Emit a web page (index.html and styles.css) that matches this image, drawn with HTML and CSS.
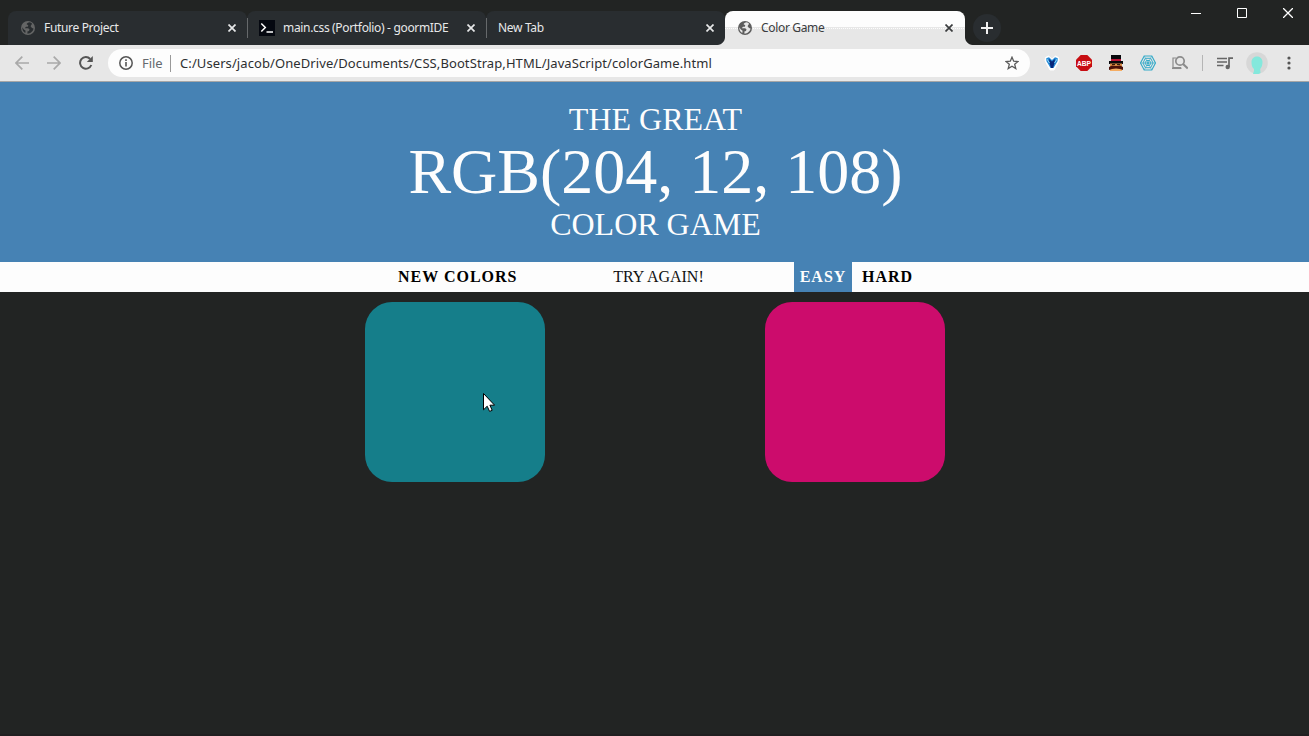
FILE: index.html
```html
<!DOCTYPE html>
<html lang="en">
<head>
<meta charset="utf-8">
<title>Color Game</title>
<link rel="stylesheet" href="styles.css">
</head>
<body>
<svg width="0" height="0" class="defs">
  <symbol id="globe" viewBox="0 0 14 14"><circle cx="7" cy="7" r="7" fill="currentColor"/><path class="land" d="M8.6 1.3C7 1.5 6 2.300 5.600 3.300L7.300 4.200 6.800 5.700H5L3.800 7.200H7.100L8.500 8.300 8 10.100 6.400 10.600 6.500 12.700C9.500 12.600 12.200 10.300 12.500 7.500L11 7.100 9.600 5.300 10.300 3.700 11.200 3C10.500 2 9.600 1.500 8.600 1.300ZM1.300 6.200C1.100 8.700 2.300 10.900 4.300 12L4.600 9.700 2.900 8.600Z"/></symbol>
  <symbol id="close" viewBox="0 0 8 8"><path d="M.5.5l7 7M7.500.500l-7 7" stroke="currentColor" stroke-width="1.700"/></symbol>
</svg>
<div class="titlebar">
  <div class="tab first">
    <svg class="favicon dim"><use href="#globe"/></svg><span class="tab-title">Future Project</span><svg class="close"><use href="#close"/></svg>
  </div>
  <div class="tab ide">
    <svg class="terminal" viewBox="0 0 16 16"><path fill="#050810" d="M0 0h16v16H0z"/><path d="M2.300 3.500l4 4-4 4M7.500 12h6.500" fill="none" stroke="#fff" stroke-width="1.500"/></svg><span class="tab-title">main.css (Portfolio) - goormIDE</span><svg class="close"><use href="#close"/></svg>
  </div>
  <div class="tab">
    <span class="tab-title t-new">New Tab</span><svg class="close"><use href="#close"/></svg>
  </div>
  <div class="tab active">
    <svg class="favicon"><use href="#globe"/></svg><span class="tab-title">Color Game</span><svg class="close"><use href="#close"/></svg>
  </div>
  <div class="new-tab"><svg width="12" height="12" viewBox="0 0 12 12"><path d="M6 0v12M0 6h12" stroke="#f1f1f1" stroke-width="2"/></svg></div>
  <div class="window-buttons">
    <svg width="10" height="10"><path d="M0 5.500h10" stroke="#fff"/></svg>
    <svg width="10" height="10"><path d="M.5.500h9v9h-9z" fill="none" stroke="#fff"/></svg>
    <svg width="10" height="10"><path d="M0 0l10 10M10 0L0 10" stroke="#fff" stroke-width="1.300"/></svg>
  </div>
</div>
<div class="toolbar">
  <div class="nav">
    <svg width="14" height="14" viewBox="0 0 14 14"><path d="M14 7H1.500M7.300.700L1 7l6.300 6.300" fill="none" stroke="#a9a9a9" stroke-width="1.700"/></svg>
    <svg width="14" height="14" viewBox="0 0 14 14"><path d="M0 7h12.500M6.700.700L13 7l-6.300 6.300" fill="none" stroke="#a9a9a9" stroke-width="1.700"/></svg>
    <svg width="14" height="14" viewBox="0 0 14 14"><path d="M12.300 9A5.800 5.800 0 1 1 11.200 3" fill="none" stroke="#555" stroke-width="2"/><path d="M13.800 0v6H7.800z" fill="#555"/></svg>
  </div>
  <div class="address">
    <svg width="14" height="14" viewBox="0 0 14 14"><circle cx="7" cy="7" r="6.200" fill="none" stroke="#555" stroke-width="1.500"/><path d="M7 6v4.500M7 3.300v1.600" stroke="#555" stroke-width="1.600"/></svg>
    <span class="scheme">File</span><span class="url">C:/Users/jacob/OneDrive/Documents/CSS,BootStrap,HTML/JavaScript/colorGame.html</span>
    <svg class="star" width="14" height="14" viewBox="0 0 14 14"><path d="M7 1.200l1.700 4 4.300.300-3.300 2.800 1.100 4.300L7 10.300l-3.800 2.300 1.100-4.300L1 5.500l4.300-.300z" fill="none" stroke="#5a5a5a" stroke-width="1.300"/></svg>
  </div>
  <div class="extensions">
    <svg viewBox="0 0 16 16"><path d="M1.500 2.500 4.500 1l3.500 3L11.500 1l3 1.500.5 3-2.500 5L10 15H6l-2.500-4.500L1 5.500z" fill="#fff" stroke="#fff"/><path d="M2 3.300 5 2.300 8 5l3-2.700 3 1-.5 3L9.500 13h-3l-4-6.700z" fill="#2489d6"/><path d="M5 4 8 6.500 11 4l-.7 4.500L9 13H7L5.700 8.500z" fill="#06267a"/><path d="M2.500 3.500l3 4.500M13.500 3.500l-3 4.500" stroke="#8bd3f5"/></svg>
    <svg viewBox="0 0 16 16"><path d="M4.700 0h6.600L16 4.700v6.600L11.300 16H4.700L0 11.300V4.700z" fill="#c70d12"/><text x="8" y="11" text-anchor="middle" textLength="14" lengthAdjust="spacingAndGlyphs" class="abp">ABP</text></svg>
    <svg viewBox="0 0 16 16"><path d="M3 0h10v6H3zM1 6h14v3H1z" fill="#08080c"/><path d="M3 4h10v2H3z" fill="#bd1538"/><path d="M2 8.500h12V12H2z" fill="#dc8c46"/><path d="M4 9h3v1H4zM9 9h3v1H9z" fill="#3a1b0c"/><path d="M2 13h12v3H2z" fill="#f5ad63"/><path d="M1 12l3-1.500 4 .5 4-.5 3 1.500v3l-3-1-4-.5-4 .5-3 1z" fill="#4b1009"/></svg>
    <svg viewBox="0 0 16 16" fill="none" stroke="#35abc9"><path d="M4.200 1h7.600L15.500 8l-3.700 7H4.200L.5 8z" stroke-width="1.200"/><path d="M5.300 3.300h5.400L13 8l-2.300 4.700H5.300L3 8z"/><path d="M6.500 5.500h3L11 8l-1.500 2.500h-3L5 8z"/><path d="M4.200 1l7.600 14M11.800 1L4.200 15M.5 8h15" stroke-width=".6"/><circle cx="8" cy="8" r="1"/></svg>
    <svg viewBox="0 0 16 16" fill="none" stroke="#8c8c8c"><path d="M4 3H1v9.500h8" stroke-width="1.200"/><path d="M0 13.300h9.500" stroke-width="1.500"/><circle cx="8" cy="6" r="4.200" stroke-width="1.700"/><path d="M10.800 8.800l5 4.700" stroke-width="2.200"/></svg>
  </div>
  <div class="divider"></div>
  <svg class="playlist" width="16" height="13" viewBox="0 0 16 13"><path d="M0 1.500h10M0 5h10M0 8.500h6.500" stroke="#666" stroke-width="1.700"/><path d="M12 10V1.200h4" fill="none" stroke="#666" stroke-width="1.700"/><circle cx="10.700" cy="10" r="2.200" fill="#666"/></svg>
  <svg class="avatar" width="22" height="22" viewBox="0 0 22 22"><circle cx="11" cy="11" r="10.800" fill="#d7d7d7"/><path d="M5.500 10c0-7.500 11-7.500 11 0 0 3-.7 5.200-2.300 7l.3 4c-1.500 1.500-6 1.600-7.500.7L8 19v-2C6 15.500 5.500 13 5.500 10z" fill="#84e8dc"/></svg>
  <svg class="menu" width="4" height="14" viewBox="0 0 4 14" fill="#555"><circle cx="2" cy="2" r="1.600"/><circle cx="2" cy="7" r="1.600"/><circle cx="2" cy="12" r="1.600"/></svg>
</div>
<h1>The Great<br><span class="target">RGB(204, 12, 108)</span><br>Color Game</h1>
<div class="stripe">
  <button class="reset">New Colors</button>
  <span class="message">Try Again!</span>
  <button class="mode selected">Easy</button>
  <button class="mode hard">Hard</button>
</div>
<div class="squares">
  <div class="square teal"><svg class="cursor" width="12" height="19" viewBox="0 0 12 19"><path d="M.5.500v16.300l3.700-3.600 2.400 5.200 2.600-1.100-2.300-5.100h4.700z" fill="#fff" stroke="#000"/></svg></div>
  <div class="square empty"></div>
  <div class="square pink"></div>
</div>
</body>
</html>
```

FILE: styles.css
```css
* { box-sizing: border-box; }
body { margin: 0; height: 736px; overflow: hidden; background: #222423; border-bottom: 2px solid #201f20; font-family: "Liberation Serif", serif; }
svg { display: block; flex: none; }
.defs { position: absolute; }
.titlebar { display: flex; height: 45px; padding: 11px 0 0 8px; font: 12px "Noto Sans", sans-serif; }
.tab { display: flex; align-items: center; width: 239px; height: 34px; padding: 0 11px; color: #e7e8e9; background: #292d30; border-radius: 8px 8px 0 0; position: relative; }
.tab + .tab:not(.active)::before { content: ""; position: absolute; left: 0; top: 7px; width: 1px; height: 20px; background: #66696b; }
.tab.first { padding-left: 13px; }
.tab.ide { padding-left: 12px; }
.tab.active { width: 240px; padding: 0 12px 0 13px; color: #3a3c3e; background: linear-gradient(#fdfdfd 16px, #e7e7e7 16px); }
/* dotted edge where the two tones of the active tab meet */
.tab.active { background: repeating-linear-gradient(90deg, #fdfdfd 0 1px, #e7e7e7 1px 2px) 0 17px / 100% 1px no-repeat, linear-gradient(#fdfdfd 16px, #e7e7e7 16px); }
/* flared feet of the active tab */
.tab.active::before, .tab.active::after { content: ""; position: absolute; bottom: 0; width: 8px; height: 8px; }
.tab.active::before { left: -8px; background: radial-gradient(circle at 0 0, transparent 7.5px, #e7e7e7 8.5px); }
.tab.active::after { right: -8px; background: radial-gradient(circle at 100% 0, transparent 7.5px, #e7e7e7 8.5px); }
.tab-title { white-space: nowrap; line-height: 16px; letter-spacing: -.33px; }
.favicon { --land: #e7e7e7; width: 14px; height: 14px; margin-right: 9px; color: #5d5d5d; }
.land { fill: var(--land); }
.dim { --land: #292d30; color: #646565; }
.terminal { width: 16px; height: 16px; margin-right: 8px; }
.close { width: 8px; height: 8px; margin-left: auto; }
.t-new { margin-left: 1px; }
.new-tab { display: grid; place-items: center; width: 28px; height: 28px; margin: 3px 0 0 8px; border-radius: 50%; background: #292d30; }
.window-buttons { display: flex; gap: 36px; margin: -3px 16px 0 auto; }
.toolbar { display: flex; align-items: center; height: 37px; background: #e7e7e7; border-bottom: 1px solid #a6a6a6; }
.nav { display: flex; gap: 18px; padding-left: 15px; width: 108px; }
.address { display: flex; align-items: center; width: 922px; height: 28px; padding: 0 11px; border-radius: 14px; background: #fdfdfd; font: 13px "Noto Sans", sans-serif; }
.scheme { margin-left: 9px; width: 29px; height: 17px; line-height: 16px; color: #656a6e; border-right: 1px solid #999; letter-spacing: -.1px; }
.url { margin-left: 9px; line-height: 16px; color: #2d2f31; letter-spacing: .09px; white-space: nowrap; }
.star { margin-left: auto; }
.extensions { display: flex; gap: 16px; margin-left: 14px; }
.extensions svg { width: 16px; height: 16px; }
.abp { font: bold 8px "Liberation Sans", sans-serif; fill: #fff; }
.divider { width: 1px; height: 16px; margin-left: 14px; background: #b5b5b5; }
.playlist { margin-left: 14px; }
.avatar { margin-left: 13px; }
.menu { margin-left: 19px; }
h1 { margin: 0; height: 180px; padding: 20px 0 20px 2px; color: #fdfdfd; background: #4682b4; font-size: 32px; font-weight: normal; line-height: 35px; text-align: center; text-transform: uppercase; }
.target { font-size: 64px; line-height: 70px; }
.stripe { display: flex; height: 30px; padding-left: 393px; background: #fdfdfd; color: #111; text-transform: uppercase; line-height: 30px; }
button { height: 30px; padding: 0 5px; border: 0; background: none; color: #000; font: bold 16px/30px "Liberation Serif", serif; letter-spacing: 1px; text-transform: uppercase; white-space: nowrap; }
.reset { width: 129px; }
.message { width: 262px; margin: 0 5px; padding-left: 1px; text-align: center; }
.selected { width: 58px; color: #fdfdfd; background: #4682b4; }
.hard { width: 61px; margin-left: 5px; }
.squares { display: grid; grid-template-columns: repeat(3, 180px); gap: 20px; width: 580px; margin: 10px 0 0 365px; }
.square { height: 180px; border-radius: 15%; }
.teal { position: relative; background: #157e8a; }
.pink { background: #cc0c6c; }
.cursor { position: absolute; left: 118px; top: 91px; }
```
